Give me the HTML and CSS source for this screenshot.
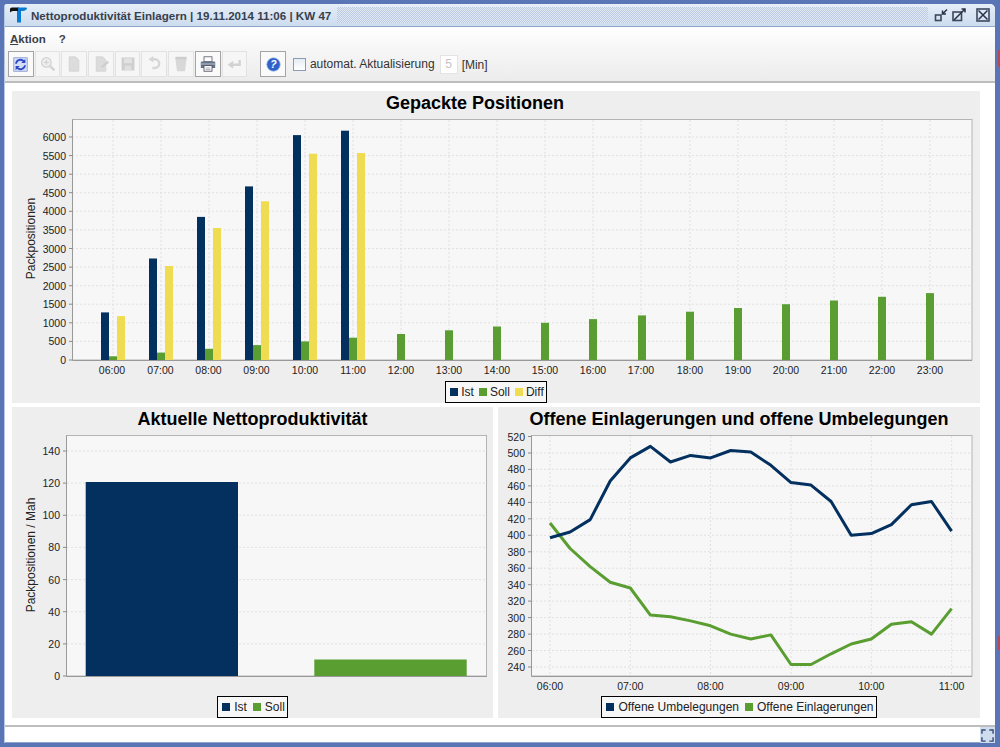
FILE: index.html
```html
<!DOCTYPE html>
<html lang="de">
<head>
<meta charset="utf-8">
<title>Nettoproduktivität Einlagern</title>
<link rel="stylesheet" href="styles.css">
</head>
<body>
<div class="window">
  <header class="titlebar">
    <svg class="logo" viewBox="0 0 17 16"><path class="logo-k" d="M0 2 Q0 0.500 2 0.500 H9 V4 H3 Q1 4 0 5.500Z"/><path class="logo-b" d="M8 0.500 H16 Q17 0.500 17 2 Q15 4 13 4 H11 V15.500 H7 V4 H8Z"/></svg>
    <span class="title">Nettoproduktivität Einlagern | 19.11.2014 11:06 | KW 47</span>
    <span class="dither"></span>
    <svg class="winbtn" viewBox="0 0 14 14"><rect x="1.500" y="7" width="5.500" height="5.500" class="wb"/><path d="M13 1.500 L8.500 6 M8.500 2.500 V6 H12" class="wl"/></svg>
    <svg class="winbtn" viewBox="0 0 14 14"><rect x="1" y="4" width="8.500" height="8.500" class="wb"/><path d="M2 12 L13 1 M9.500 1 H13 V4.500" class="wl"/></svg>
    <svg class="winbtn close" viewBox="0 0 14 14"><rect x="1" y="1" width="12" height="12" class="wb"/><path d="M2.500 2.500 L11.500 11.500 M11.500 2.500 L2.500 11.500" class="wl"/></svg>
  </header>

  <nav class="menubar"><span class="menu"><u>A</u>ktion</span><span class="menu">?</span></nav>

  <div class="toolbar">
    <button class="tool on small"><svg viewBox="0 0 20 20"><rect x="1" y="1" width="18" height="18" fill="#d3ddf4" stroke="#7f93cf"/><path d="M4 9 A6 6 0 0 1 15 6.500" fill="none" stroke="#2b48c8" stroke-width="2.400"/><path d="M16.500 2.500 V8 H11Z" fill="#2b48c8"/><path d="M16 11 A6 6 0 0 1 5 13.500" fill="none" stroke="#2b48c8" stroke-width="2.400"/><path d="M3.500 17.500 V12 H9Z" fill="#2b48c8"/></svg></button>
    <button class="tool off"><svg viewBox="0 0 20 20"><circle cx="8" cy="8" r="6" fill="#eee" stroke="#d2d2d2" stroke-width="1.500"/><path d="M5 8 H11 M8 5 V11" stroke="#d2d2d2" stroke-width="1.500"/><path d="M12.500 12.500 L18 18" stroke="#d2d2d2" stroke-width="3"/></svg></button>
    <button class="tool off"><svg viewBox="0 0 20 20"><path d="M4 1 H12 L16 5 V19 H4Z" fill="#dcdcdc" stroke="#d2d2d2"/></svg></button>
    <button class="tool off"><svg viewBox="0 0 20 20"><path d="M4 1 H12 L16 5 V19 H4Z" fill="#dcdcdc" stroke="#d2d2d2"/><path d="M10 13 L18 6 L20 8 L12 15Z" fill="#cecece"/></svg></button>
    <button class="tool off"><svg viewBox="0 0 20 20"><path d="M2 2 H18 V18 H2Z" fill="#cfcfcf"/><rect x="5" y="3" width="10" height="6" fill="#e2e2e2"/><rect x="6" y="12" width="8" height="6" fill="#e0e0e0"/></svg></button>
    <button class="tool off"><svg viewBox="0 0 20 20"><path d="M7 4 H11 A5 5 0 0 1 11 15 H8" fill="none" stroke="#d6d6d6" stroke-width="3"/><path d="M9 0 V8 L3 4Z" fill="#d6d6d6"/></svg></button>
    <button class="tool off"><svg viewBox="0 0 20 20"><path d="M3 3 H17 L15 19 H5Z" fill="#d8d8d8"/><rect x="3" y="1" width="14" height="3" fill="#cdcdcd"/></svg></button>
    <button class="tool on"><svg viewBox="0 0 20 20"><rect x="5" y="1" width="10" height="6" fill="#fff" stroke="#556"/><path d="M2 7 H18 Q19 7 19 8 V15 H1 V8 Q1 7 2 7Z" fill="#66758a"/><rect x="1" y="9" width="18" height="2" fill="#9aa6b5"/><rect x="5" y="12" width="10" height="7" fill="#fff" stroke="#445"/><path d="M7 15 H13 M7 17 H13" stroke="#99a"/></svg></button>
    <button class="tool off"><svg viewBox="0 0 20 20"><path d="M17 5 V11 H8" fill="none" stroke="#d2d2d2" stroke-width="3"/><path d="M9 6 V16 L2 11Z" fill="#d2d2d2"/></svg></button>
    <button class="tool on small help"><svg viewBox="0 0 20 20"><circle cx="10" cy="10" r="9" fill="#2e62c8" stroke="#a6bce8"/><text x="10" y="15" class="qmark">?</text></svg></button>
    <label class="auto"><span class="check"></span>automat. Aktualisierung</label>
    <span class="spin">5</span>
    <span class="unit">[Min]</span>
  </div>

  <main class="content">
    <section class="panel wide">
      <h2>Gepackte Positionen</h2>
      <svg class="chart" viewBox="12 119 968 261">
        <rect x="72.500" y="119.500" width="899.500" height="240.500" class="plot"/>
        <path class="grid" d="M72 341.400H972M72 322.800H972M72 304.200H972M72 285.700H972M72 267.100H972M72 248.500H972M72 229.900H972M72 211.300H972M72 192.700H972M72 174.200H972M72 155.600H972M72 137H972"/>
        <path class="grid" d="M113 120V360M161 120V360M209 120V360M257 120V360M305 120V360M353 120V360M401 120V360M449 120V360M497 120V360M545 120V360M593 120V360M641 120V360M690 120V360M738 120V360M786 120V360M834 120V360M882 120V360M930 120V360"/>
        <path class="tick" d="M69 360H72M69 341.400H72M69 322.800H72M69 304.200H72M69 285.700H72M69 267.100H72M69 248.500H72M69 229.900H72M69 211.300H72M69 192.700H72M69 174.200H72M69 155.600H72M69 137H72"/>
        <g class="navy">
          <rect x="101" y="312.400" width="8" height="47.600"/><rect x="149" y="258.500" width="8" height="101.500"/><rect x="197" y="216.900" width="8" height="143.100"/><rect x="245" y="186.400" width="8" height="173.600"/><rect x="293" y="135.100" width="8" height="224.900"/><rect x="341" y="130.700" width="8" height="229.300"/>
        </g>
        <g class="green">
          <rect x="109" y="356.300" width="8" height="3.700"/><rect x="157" y="352.600" width="8" height="7.400"/><rect x="205" y="348.800" width="8" height="11.200"/><rect x="253" y="345.100" width="8" height="14.900"/><rect x="301" y="341.400" width="8" height="18.600"/><rect x="349" y="337.700" width="8" height="22.300"/><rect x="397" y="334" width="8" height="26"/><rect x="445" y="330.300" width="8" height="29.700"/><rect x="493" y="326.500" width="8" height="33.500"/><rect x="541" y="322.800" width="8" height="37.200"/><rect x="589" y="319.100" width="8" height="40.900"/><rect x="638" y="315.400" width="8" height="44.600"/><rect x="686" y="311.700" width="8" height="48.300"/><rect x="734" y="308" width="8" height="52"/><rect x="782" y="304.200" width="8" height="55.800"/><rect x="830" y="300.500" width="8" height="59.500"/><rect x="878" y="296.800" width="8" height="63.200"/><rect x="926" y="293.100" width="8" height="66.900"/>
        </g>
        <g class="yellow">
          <rect x="117" y="316.100" width="8" height="43.900"/><rect x="165" y="266" width="8" height="94"/><rect x="213" y="228" width="8" height="132"/><rect x="261" y="201.300" width="8" height="158.700"/><rect x="309" y="153.700" width="8" height="206.300"/><rect x="357" y="153" width="8" height="207"/>
        </g>
        <path class="axis" d="M72.500 119.500V360.500H972"/>
        <g class="ylab">
          <text x="66" y="364">0</text><text x="66" y="345.400">500</text><text x="66" y="326.800">1000</text><text x="66" y="308.200">1500</text><text x="66" y="289.700">2000</text><text x="66" y="271.100">2500</text><text x="66" y="252.500">3000</text><text x="66" y="233.900">3500</text><text x="66" y="215.300">4000</text><text x="66" y="196.700">4500</text><text x="66" y="178.200">5000</text><text x="66" y="159.600">5500</text><text x="66" y="141">6000</text>
        </g>
        <g class="xlab">
          <text x="112" y="374">06:00</text><text x="160.500" y="374">07:00</text><text x="208.500" y="374">08:00</text><text x="256.500" y="374">09:00</text><text x="305" y="374">10:00</text><text x="353" y="374">11:00</text><text x="401" y="374">12:00</text><text x="449" y="374">13:00</text><text x="497" y="374">14:00</text><text x="545" y="374">15:00</text><text x="593" y="374">16:00</text><text x="641" y="374">17:00</text><text x="690" y="374">18:00</text><text x="738" y="374">19:00</text><text x="786" y="374">20:00</text><text x="834" y="374">21:00</text><text x="882" y="374">22:00</text><text x="930" y="374">23:00</text>
        </g>
        <text class="atitle" transform="translate(35 238.500) rotate(-90)">Packpositionen</text>
      </svg>
      <div class="legend"><i class="sw s-navy"></i>Ist<i class="sw s-green"></i>Soll<i class="sw s-yellow"></i>Diff</div>
    </section>

    <section class="panel">
      <h2>Aktuelle Nettoproduktivität</h2>
      <svg class="chart" viewBox="12 435 481 261">
        <rect x="66.500" y="435.500" width="420" height="240.500" class="plot"/>
        <path class="grid" d="M67 451H487M67 483.100H487M67 515.300H487M67 547.400H487M67 579.600H487M67 611.700H487M67 643.900H487"/>
        <path class="tick" d="M63 676H66M63 643.900H66M63 611.700H66M63 579.600H66M63 547.400H66M63 515.300H66M63 483.100H66M63 451H66"/>
        <rect x="85.700" y="482" width="152.300" height="194" class="navy"/>
        <rect x="314.300" y="659.500" width="152.400" height="16.500" class="green"/>
        <path class="axis" d="M66.500 435.500V676.500H487"/>
        <g class="ylab">
          <text x="60" y="680">0</text><text x="60" y="647.900">20</text><text x="60" y="615.700">40</text><text x="60" y="583.600">60</text><text x="60" y="551.400">80</text><text x="60" y="519.300">100</text><text x="60" y="487.100">120</text><text x="60" y="455">140</text>
        </g>
        <text class="atitle" transform="translate(35 555) rotate(-90)">Packpositionen / Mah</text>
      </svg>
      <div class="legend"><i class="sw s-navy"></i>Ist<i class="sw s-green"></i>Soll</div>
    </section>

    <section class="panel">
      <h2>Offene Einlagerungen und offene Umbelegungen</h2>
      <svg class="chart" viewBox="498 435 482 261">
        <rect x="531.500" y="435.500" width="440.500" height="240.500" class="plot"/>
        <path class="grid" d="M532 453H972M532 469.400H972M532 485.900H972M532 502.400H972M532 518.800H972M532 535.300H972M532 551.800H972M532 568.200H972M532 584.700H972M532 601.100H972M532 617.600H972M532 634.100H972M532 650.500H972M532 667H972"/>
        <path class="grid" d="M550 436V676M630.300 436V676M710.500 436V676M791 436V676M871.300 436V676M951.600 436V676"/>
        <path class="tick" d="M528 436.500H531M528 453H531M528 469.400H531M528 485.900H531M528 502.400H531M528 518.800H531M528 535.300H531M528 551.800H531M528 568.200H531M528 584.700H531M528 601.100H531M528 617.600H531M528 634.100H531M528 650.500H531M528 667H531"/>
        <polyline class="line l-green" points="550,523 570.100,548.500 590.200,566.600 610.200,582.200 630.300,588 650.400,615.100 670.500,616.800 690.600,620.900 710.600,625.800 730.700,634.100 750.800,639 770.900,634.900 791,664.500 811,664.500 831.100,653.800 851.200,644 871.300,639 891.400,624.200 911.400,621.700 931.500,634.100 951.600,608.600"/>
        <polyline class="line l-navy" points="550,537.800 570.100,532 590.200,519.600 610.200,481 630.300,457.900 650.400,446.400 670.500,462 690.600,455.400 710.600,457.900 730.700,450.500 750.800,452.100 770.900,465.300 791,482.600 811,485.100 831.100,501.500 851.200,535.300 871.300,533.600 891.400,524.600 911.400,504.800 931.500,501.500 951.600,531.200"/>
        <path class="axis" d="M531.500 435.500V676.500H972"/>
        <g class="ylab">
          <text x="525" y="671">240</text><text x="525" y="654.500">260</text><text x="525" y="638.100">280</text><text x="525" y="621.600">300</text><text x="525" y="605.100">320</text><text x="525" y="588.700">340</text><text x="525" y="572.200">360</text><text x="525" y="555.800">380</text><text x="525" y="539.300">400</text><text x="525" y="522.800">420</text><text x="525" y="506.400">440</text><text x="525" y="489.900">460</text><text x="525" y="473.400">480</text><text x="525" y="457">500</text><text x="525" y="440.500">520</text>
        </g>
        <g class="xlab">
          <text x="550" y="690">06:00</text><text x="630.300" y="690">07:00</text><text x="710.500" y="690">08:00</text><text x="791" y="690">09:00</text><text x="871.300" y="690">10:00</text><text x="951.600" y="690">11:00</text>
        </g>
      </svg>
      <div class="legend"><i class="sw s-navy"></i>Offene Umbelegungen<i class="sw s-green"></i>Offene Einlagerungen</div>
    </section>
  </main>

  <footer class="statusbar">
    <span class="status"></span>
    <button class="full"><svg viewBox="0 0 14 14"><path d="M1 5 V1 H5 M9 1 H13 V5 M13 9 V13 H9 M5 13 H1 V9" fill="none" stroke="#334a78" stroke-width="1.500"/></svg></button>
  </footer>
</div>
<span class="desk d1"></span>
<span class="desk d2"></span>
</body>
</html>
```
FILE: styles.css
```css
* { box-sizing: border-box; }
html, body { margin: 0; height: 100%; overflow: hidden; }
body {
  position: relative;
  width: 1000px;
  height: 747px;
  background: #5975b5;
  padding: 4px 5px 4px 4px;
  font-family: "Liberation Sans", Arial, sans-serif;
  color: #222;
}
.window {
  height: 739px;
  display: flex;
  flex-direction: column;
  background: #fff;
  border-left: 1px solid #b9c8e2;
  border-top-right-radius: 5px;
  border-top-left-radius: 3px;
  overflow: hidden;
}

/* title bar */
.titlebar {
  height: 23px;
  display: flex;
  align-items: center;
  padding: 0 5px;
  background: linear-gradient(#e6eef8, #ccdcef);
  border-bottom: 1px solid #8ea6cb;
}
.logo { width: 17px; height: 16px; flex: none; }
.logo-k { fill: #111; }
.logo-b { fill: #0a7bd0; }
.title {
  margin-left: 4px;
  font-size: 11.6px;
  font-weight: 700;
  color: #38404c;
  white-space: nowrap;
}
.dither {
  flex: 1;
  height: 16px;
  margin: 0 6px;
  background-color: #dfe8f4;
  background-image: repeating-conic-gradient(#bccbdf 0 25%, transparent 0 50%);
  background-size: 2px 2px;
}
.winbtn { width: 14px; height: 14px; margin-right: 4px; flex: none; }
.winbtn.close { margin: -1px 0 0 6px; }
.wb { fill: none; stroke: #3d4860; stroke-width: 1.6; }
.wl { fill: none; stroke: #2b3347; stroke-width: 1.5; }

/* menu + toolbar */
.menubar {
  height: 23px;
  display: flex;
  align-items: center;
  gap: 13px;
  padding-left: 5px;
  background: linear-gradient(#fff, #f6f6f6);
}
.menu { font-size: 11.5px; font-weight: 700; color: #3b4048; }
.toolbar {
  height: 33px;
  display: flex;
  align-items: flex-start;
  padding: 1px 0 0 3px;
  gap: 1px;
  background: linear-gradient(#f6f6f6, #ececec);
  border-bottom: 2px solid #bdbdbd;
}
.tool {
  width: 25.7px;
  height: 26px;
  padding: 0;
  display: flex;
  align-items: center;
  justify-content: center;
  background: #f6f6f6;
  border: 1px solid #e2e2e2;
}
.tool.on { border-color: #a4a4a4; background: #fafafa; }
.tool svg { width: 16px; height: 16px; }
.tool.small svg { width: 15px; height: 15px; }
.help { margin-left: 12px; }
.qmark { font: italic 700 14px "Liberation Sans", sans-serif; fill: #fff; text-anchor: middle; }
.auto {
  display: flex;
  align-items: center;
  gap: 4px;
  margin: 6px 0 0 6px;
  font-size: 12px;
  color: #333;
}
.check {
  width: 13px;
  height: 13px;
  border: 1px solid #8a9bb5;
  background: linear-gradient(#e6ecf4, #fff);
}
.spin {
  width: 18px;
  height: 19px;
  margin: 4px 0 0 4px;
  border: 1px solid #e4e4e4;
  background: #fff;
  color: #c4c4c4;
  font-size: 12px;
  line-height: 17px;
  text-align: center;
}
.unit { margin: 7px 0 0 3px; font-size: 12px; color: #333; }

/* charts */
.content {
  flex: 1;
  display: grid;
  grid-template-columns: 481px 482px;
  grid-template-rows: 312px 311px;
  gap: 4px 5px;
  padding: 8px 0 0 7px;
}
.panel {
  display: flex;
  flex-direction: column;
  align-items: center;
  background: #eee;
}
.wide { grid-column: 1 / 3; }
.wide h2 { margin-right: 42px; }
.wide .legend { margin-top: 1px; gap: 3px; }
h2 {
  height: 28px;
  margin: 0;
  font-size: 18px;
  line-height: 25px;
  font-weight: 700;
  color: #000;
  white-space: nowrap;
}
.chart { display: block; width: 100%; height: 261px; flex: none; overflow: visible; }
.plot { fill: #f7f7f7; stroke: #b4b4b4; stroke-width: 1; }
.grid { fill: none; stroke: #e0e0e0; stroke-width: 1; stroke-dasharray: 2 2; }
.tick { fill: none; stroke: #888; stroke-width: 1; }
.axis { fill: none; stroke: #999; stroke-width: 1; }
.navy { fill: #03305f; }
.green { fill: #5a9e32; }
.yellow { fill: #f0dc52; }
.line { fill: none; stroke-width: 3; stroke-linejoin: round; }
.l-navy { stroke: #03305f; }
.l-green { stroke: #5a9e32; }
.ylab text { font-size: 10.5px; text-anchor: end; fill: #222; }
.xlab text { font-size: 10.5px; text-anchor: middle; fill: #222; }
.atitle { font-size: 12px; text-anchor: middle; fill: #222; }
.legend {
  height: 22px;
  display: flex;
  align-items: center;
  gap: 4px;
  padding: 0 2px;
  background: #f7f7f7;
  border: 1px solid #000;
  font-size: 12px;
  color: #222;
  white-space: nowrap;
}
.sw { width: 8px; height: 8px; display: block; margin-left: 2px; }
.s-navy { background: #03305f; }
.s-green { background: #5a9e32; }
.s-yellow { background: #f0dc52; }

/* status */
.statusbar {
  height: 18px;
  flex: none;
  display: flex;
  border-top: 2px solid #bdbdbd;
}
.status { flex: 1; background: #fff; border-bottom: 1px solid #8ea6cb; }
.full {
  width: 15px;
  padding: 0;
  border: 0;
  background: #cfdcee;
  display: flex;
  align-items: center;
  justify-content: center;
}
.full svg { width: 13px; height: 13px; }

/* slivers of the desktop showing past the window edge */
.desk { position: absolute; right: 0; width: 2px; background: #b24a5c; }
.d1 { top: 50px; height: 17px; }
.d2 { top: 636px; height: 14px; }
```
